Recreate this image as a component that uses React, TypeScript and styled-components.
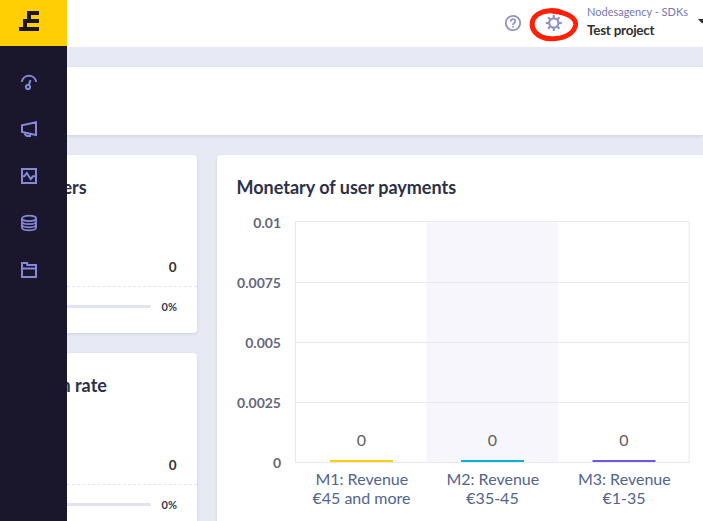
import React from "react";
import styled, { createGlobalStyle } from "styled-components";

const GlobalStyle = createGlobalStyle`
  * { box-sizing: border-box; }
  body { margin: 0; overflow: hidden; font-family: Lato, "Open Sans", sans-serif; }
`;

const Shell = styled.div`
  display: flex;
  width: 703px;
  height: 521px;
  overflow: hidden;
  background: #e7e9f5;
`;

const Sidebar = styled.nav`
  position: relative;
  z-index: 1;
  flex: 0 0 67px;
  background: #1a162c;
`;

const Logo = styled.div`
  height: 46px;
  background: #ffcf04;
  svg { display: block; }
`;

const NavList = styled.div`
  display: flex;
  flex-direction: column;
  gap: 23px;
  padding: 24px 0 0 17px;
`;

const NavIcon = styled.svg`
  display: block;
  width: 24px;
  height: 24px;
  fill: none;
  stroke: #8688d8;
  stroke-width: 2;
`;

const Main = styled.main`
  flex: 1;
  min-width: 0;
`;

const Header = styled.header`
  display: flex;
  height: 47px;
  padding-left: 437px;
  background: #fff;
  overflow: hidden;
`;

const HelpIcon = styled.svg`
  flex: none;
  width: 18px;
  height: 18px;
  margin-top: 14px;
`;

const GearIcon = styled.svg`
  flex: none;
  width: 54px;
  height: 46px;
  margin-left: 5px;
`;

const Project = styled.div`
  flex: none;
  width: 112px;
  margin-left: 6px;
  padding-top: 5px;
  white-space: nowrap;
`;

const Company = styled.div`
  font-size: 11px;
  line-height: 14px;
  color: #7577b1;
`;

const ProjectName = styled.div`
  margin-top: 3px;
  font-size: 13.5px;
  font-weight: 700;
  line-height: 17px;
  letter-spacing: -0.25px;
  color: #303030;
`;

const Caret = styled.svg`
  flex: none;
  width: 8px;
  height: 5px;
  margin: 19px 0 0 -1px;
`;

const Banner = styled.div`
  height: 68px;
  margin-top: 20px;
  background: #fff;
  box-shadow: 0 1px 3px rgba(60, 60, 100, 0.16);
`;

const Board = styled.div`
  display: flex;
  gap: 20px;
  margin-top: 20px;
`;

const Column = styled.div`
  display: flex;
  flex: 0 0 130px;
  flex-direction: column;
  gap: 20px;
`;

const MetricCard = styled.section`
  height: 178px;
  background: #fff;
  border-radius: 0 4px 4px 0;
  box-shadow: 0 1px 3px rgba(60, 60, 100, 0.14);
`;

const Title = styled.h2<{ $shift?: number }>`
  margin: 0 0 0 ${(p) => p.$shift ?? -0.5}px;
  font-size: 18px;
  font-weight: 700;
  line-height: 25px;
  letter-spacing: 0;
  color: #2c3148;
  white-space: nowrap;
`;

const MetricHead = styled.div`
  height: 82px;
  padding-top: 20px;
`;

const MetricValue = styled.div`
  height: 50px;
  padding: 20px 20.5px 0 0;
  border-bottom: 1px dashed #e4e6f7;
  font-size: 13.5px;
  font-weight: 700;
  line-height: 20px;
  text-align: right;
  color: #333;
`;

const MetricProgress = styled.div`
  display: flex;
  align-items: center;
  height: 39px;
  padding-right: 20px;
  font-size: 11px;
  font-weight: 700;
  color: #333a50;
`;

const Track = styled.div`
  width: 84px;
  height: 3px;
  margin-right: auto;
  border-radius: 0 2px 2px 0;
  background: #e1e3f0;
`;

const ChartCard = styled.section`
  flex: none;
  width: 520px;
  height: 390px;
  padding: 20px 20px 0;
  background: #fff;
  border-radius: 4px;
  box-shadow: 0 1px 3px rgba(60, 60, 100, 0.14);
`;

const Chart = styled.svg`
  display: block;
  margin: 11px 0 0 -20px;
  font-family: Lato, sans-serif;
`;

const AxisLabel = styled.text`
  font-size: 14px;
  font-weight: 700;
  fill: #65687f;
  text-anchor: end;
`;

const BarValue = styled.text`
  font-size: 16px;
  fill: #606060;
  text-anchor: middle;
`;

const Category = styled.text`
  font-size: 16px;
  fill: #53648c;
  text-anchor: middle;
`;

const metrics = [
  { title: "ers", shift: -4.5 },
  { title: "n rate", shift: -6.5 },
];

const ticks = [
  { label: "0.01", y: 10.5, labelY: 17 },
  { label: "0.0075", y: 71.5, labelY: 77 },
  { label: "0.005", y: 131.5, labelY: 137 },
  { label: "0.0025", y: 191.5, labelY: 197 },
  { label: "0", y: 251.5, labelY: 257 },
];

const bars = [
  { x: 144.5, color: "#ffcf04", name: "M1: Revenue", range: "€45 and more" },
  { x: 275.5, color: "#05b2da", name: "M2: Revenue", range: "€35-45" },
  { x: 407, color: "#6d56e4", name: "M3: Revenue", range: "€1-35" },
];

export default function App() {
  return (
    <>
      <GlobalStyle />
      <Shell>
        <Sidebar>
          <Logo>
            <svg width="67" height="46" fill="#1c172b">
              <path d="M27 11H39V15H31V19H39V23H27V27H39V31H19V27H23V19H27Z" />
            </svg>
          </Logo>
          <NavList>
            <NavIcon viewBox="0 0 24 24">
              <path d="M4.8 11.9A7.3 7.3 0 0 1 19.2 11.9M11.8 15L13.5 10.2" />
              <circle cx="11" cy="17" r="2.1" />
            </NavIcon>
            <NavIcon viewBox="0 0 24 24">
              <path d="M19 5.2V18L5 15V8.3ZM8 15.8V17.4L9.8 19H13V17" />
            </NavIcon>
            <NavIcon viewBox="0 0 24 24">
              <path d="M5 5H19V19H5ZM5 12.3H7.3L9.8 9L13.7 15L16 12.3H19" />
            </NavIcon>
            <NavIcon viewBox="0 0 24 24" strokeLinejoin="round">
              <g strokeWidth="1.7">
                <ellipse cx="12" cy="7.4" rx="7.1" ry="2.7" />
                <path d="M4.9 7.4V16.6C4.9 20.2 19.1 20.2 19.1 16.6V7.4M4.9 10.5C4.9 14.1 19.1 14.1 19.1 10.5M4.9 13.6C4.9 17.2 19.1 17.2 19.1 13.6" />
              </g>
            </NavIcon>
            <NavIcon viewBox="0 0 24 24">
              <path d="M5 19V5H10.2V7H19V19ZM5 10.5H19" />
            </NavIcon>
          </NavList>
        </Sidebar>
        <Main>
          <Header>
            <HelpIcon viewBox="0 0 18 18" fill="none" stroke="#9293c2" strokeWidth="1.8">
              <circle cx="9" cy="9" r="7.2" />
              <path d="M6.7 7.4C6.7 4.2 11.4 4.4 11.3 7.2C11.3 9 9 8.9 9 11" />
              <path d="M9 12V13.6" />
            </HelpIcon>
            <GearIcon viewBox="0 0 54 46" fill="none">
              <g stroke="#9293c2" strokeWidth="2.2">
                <circle cx="26.8" cy="23" r="4.6" />
                {[0, 45, 90, 135, 180, 225, 270, 315].map((a) => (
                  <path key={a} d="M26.8 18V15" transform={`rotate(${a} 26.8 23)`} />
                ))}
              </g>
              <path
                d="M35 12.5C28 9.4 17 10 10.5 14.5C4 19 3.7 27 8 32C12.5 37.4 20 39.5 29 38.5C39 37.7 47.5 32.5 48.6 25C49.4 18 41 12.7 27 11.5"
                stroke="#ff2009"
                strokeWidth="5"
                strokeLinecap="round"
              />
            </GearIcon>
            <Project>
              <Company>Nodesagency - SDKs</Company>
              <ProjectName>Test project</ProjectName>
            </Project>
            <Caret viewBox="0 0 8 5">
              <path d="M0 0H8L4 4.5Z" fill="#303030" />
            </Caret>
          </Header>
          <Banner />
          <Board>
            <Column>
              {metrics.map((m) => (
                <MetricCard key={m.title}>
                  <MetricHead>
                    <Title $shift={m.shift}>{m.title}</Title>
                  </MetricHead>
                  <MetricValue>0</MetricValue>
                  <MetricProgress>
                    <Track />
                    0%
                  </MetricProgress>
                </MetricCard>
              ))}
            </Column>
            <ChartCard>
              <Title>Monetary of user payments</Title>
              <Chart width="486" height="310">
                <rect x="209.5" y="11" width="131.5" height="240" fill="#f6f6fc" />
                {ticks.map((t) => (
                  <g key={t.label}>
                    <path d={`M78 ${t.y}H472`} stroke="#e8e8f0" />
                    <AxisLabel x="64" y={t.labelY}>{t.label}</AxisLabel>
                  </g>
                ))}
                <path d="M78.5 11V252M472.2 11V252" stroke="#e8e8f0" />
                {bars.map((b) => (
                  <g key={b.name}>
                    <rect x={b.x - 31.5} y="249" width="63" height="2" fill={b.color} />
                    <BarValue x={b.x} y="235">0</BarValue>
                    <Category x={b.x + 0.3} y="274">{b.name}</Category>
                    <Category x={b.x} y="293">{b.range}</Category>
                  </g>
                ))}
              </Chart>
            </ChartCard>
          </Board>
        </Main>
      </Shell>
    </>
  );
}
